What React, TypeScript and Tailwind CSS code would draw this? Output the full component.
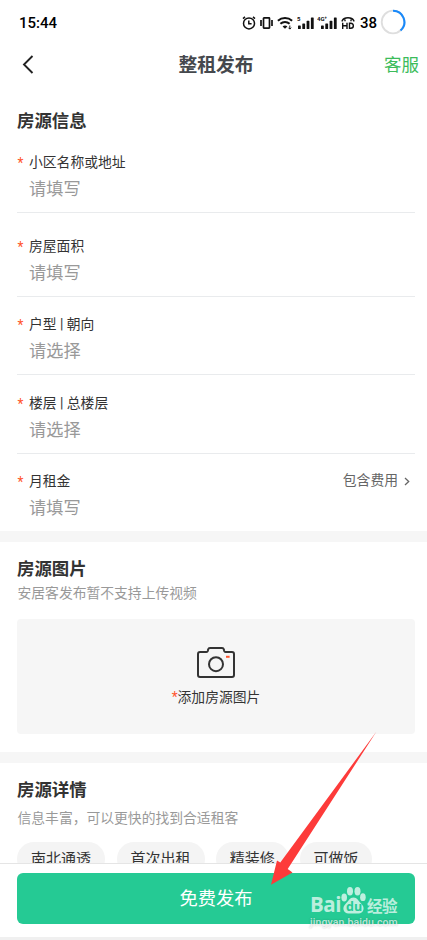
import type { ReactNode } from 'react';
import clsx from 'clsx';

interface Field {
  label: string;
  placeholder: string;
  height: string;
  extra?: string;
}

const fields: Field[] = [
  { label: '小区名称或地址', placeholder: '请填写', height: 'h-[76px]' },
  { label: '房屋面积', placeholder: '请填写', height: 'h-[84px]' },
  { label: '户型 | 朝向', placeholder: '请选择', height: 'h-[78px]' },
  { label: '楼层 | 总楼层', placeholder: '请选择', height: 'h-[79px]' },
  { label: '月租金', placeholder: '请填写', height: 'h-[77px]', extra: '包含费用' },
];

const tags = [
  { name: '南北通透', width: 'w-[88px]' },
  { name: '首次出租', width: 'w-[88px]' },
  { name: '精装修', width: 'w-[72.5px]' },
  { name: '可做饭', width: 'w-[72px]' },
];

function SignalBars({ label, width }: { label: string; width: number }) {
  return (
    <svg width={width} height="14" viewBox={`0 0 ${width} 14`} fill="#111">
      <text x="0" y="5" fontSize="6" fontWeight="700" fontFamily="Roboto, sans-serif">
        {label}
      </text>
      <g transform={`translate(${width - 16} 0)`}>
        <rect x="0" y="9.5" width="2.8" height="3.5" rx="0.6" />
        <rect x="4.3" y="7.5" width="2.8" height="5.5" rx="0.6" />
        <rect x="8.6" y="4.8" width="2.8" height="8.2" rx="0.6" />
        <rect x="12.9" y="1.5" width="2.8" height="11.5" rx="0.6" />
      </g>
    </svg>
  );
}

function StatusBar() {
  return (
    <div className="flex h-[45px] items-center justify-between pr-[21px] pl-[19px] font-[Roboto,sans-serif] text-[15px] font-medium text-black">
      <span className="mt-px">15:44</span>
      <div className="flex items-center">
        {/* Alarma */}
        <svg width="14" height="14" viewBox="0 0 14 14" fill="none" stroke="#111" strokeWidth="1.5">
          <circle cx="7" cy="7.4" r="5.5" />
          <path d="M6.8 4.5v3.2h2.8M1 2.6 3 .9M13 2.6 11 .9" />
        </svg>
        {/* Vibración */}
        <svg className="ml-[4px]" width="13" height="14" viewBox="0 0 13 14" fill="none" stroke="#111" strokeWidth="1.7">
          <rect x="3.5" y="1.9" width="6" height="10.2" rx="0.5" />
          <path d="M1 4v6M12 4v6" />
        </svg>
        {/* Wifi */}
        <svg className="ml-[4px]" width="16" height="14" viewBox="0 0 16 14" fill="none" stroke="#111" strokeWidth="2">
          <path d="M.9 4.7c4-3.6 10.2-3.6 14.2 0M3.4 7.8c2.6-2.4 6.6-2.4 9.2 0" />
          <path d="M8 12.8 5.6 10.4c1.3-1.2 3.5-1.2 4.8 0z" fill="#111" stroke="none" />
          <path d="M12.8 9.5v3.6M11.4 11.7l1.4 1.4 1.4-1.4" strokeWidth="1" />
        </svg>
        <div className="ml-[4px] flex gap-[3px]">
          <SignalBars label="5" width={17} />
          <SignalBars label="4G⁺" width={20} />
        </div>
        {/* Llamada HD */}
        <svg className="ml-[4px]" width="14" height="14" viewBox="0 0 14 14" fill="none" stroke="#111" strokeWidth="1.4">
          <path d="M1.2 5.5V4.6C3.2.7 10.8.7 12.8 4.6v.9M4 5.2V3.6M10 5.2V3.6" />
          <path d="M1.7 6.7V13M6 6.7V13M1.7 9.8H6M8.5 7.3v5h1.3c3.4 0 3.4-5 0-5z" />
        </svg>
        <span className="mt-px ml-[5px]">38</span>
        <svg className="mt-[-2px] ml-[3px]" width="26" height="26" viewBox="0 0 26 26" fill="none">
          <circle cx="13" cy="13" r="11.3" stroke="#dedede" strokeWidth="1.8" />
          <path d="M13 1.7A11.3 11.3 0 0 1 20.5 21.5" stroke="#1989fa" strokeWidth="2.1" />
        </svg>
      </div>
    </div>
  );
}

function NavBar() {
  return (
    <header className="grid h-[38px] grid-cols-3 items-center pr-2 pl-[21px]">
      <svg width="13" height="20" viewBox="0 0 13 20" fill="none" stroke="#222" strokeWidth="1.9">
        <path d="M11.5 2 3 10.5l8.5 8.5" />
      </svg>
      <h1 className="-ml-2 text-center text-[18.8px] leading-6 font-bold whitespace-nowrap text-[#45484d]">整租发布</h1>
      <span className="text-right text-[17.5px] leading-6 text-[#3cbc5b]">客服</span>
    </header>
  );
}

function SectionTitle({ children }: { children: ReactNode }) {
  return <h2 className="text-[17.4px] leading-6 font-bold text-[#333]">{children}</h2>;
}

function FormRow({ field, last }: { field: Field; last: boolean }) {
  return (
    <div
      className={clsx(
        'flex flex-col justify-end gap-1 pb-3',
        field.height,
        !last && 'border-b border-[#e9ebed]',
      )}
    >
      <div className="flex h-5 items-center font-[Roboto,'Noto_Sans_CJK_SC',sans-serif] text-[13.8px] leading-5 text-[#333]">
        <span className="mt-px w-3 pl-[0.5px] text-[#ff552e]">*</span>
        <span>{field.label}</span>
        {field.extra && (
          <span className="mt-[-2px] ml-auto flex items-center text-[#666]">
            {field.extra}
            <svg className="mt-[2px] mr-[5px] ml-[6px]" width="6" height="9" viewBox="0 0 6 9" fill="none" stroke="#666" strokeWidth="1.3">
              <path d="M1 1l3.7 3.5L1 8" />
            </svg>
          </span>
        )}
      </div>
      <div className="pl-3 text-[17.2px] leading-6 text-[#999]">{field.placeholder}</div>
    </div>
  );
}

function CameraIcon() {
  return (
    <svg width="38" height="31" viewBox="0 0 38 31" fill="none" stroke="#333" strokeWidth="2">
      <path d="M3 5h6.5q1 0 1.3-1l.3-1.4Q11.5 1 13 1h12q1.5 0 1.9 1.6l.3 1.4q.3 1 1.3 1H35q2 0 2 2v21q0 2-2 2H3q-2 0-2-2V7q0-2 2-2z" />
      <circle cx="19" cy="17.2" r="7" />
      <path d="M29 9.8h3.6" stroke="#ff552e" />
    </svg>
  );
}

function Watermark() {
  return (
    <div className="absolute top-[22px] left-[310px] w-[90px] text-white/70">
      <div className="flex h-[29px] items-end">
        <span className="w-[31px] font-['Open_Sans',sans-serif] text-[20.5px] leading-[21px] font-bold tracking-[-0.4px]">Bai</span>
        <svg className="shrink-0" width="25" height="29" viewBox="0 0 25 29" fill="currentColor">
          <ellipse cx="9" cy="5.2" rx="3" ry="4.2" />
          <ellipse cx="16.5" cy="5.2" rx="3" ry="4.2" />
          <ellipse cx="3.2" cy="11.5" rx="2.8" ry="3.9" />
          <ellipse cx="21.9" cy="11.2" rx="2.8" ry="3.9" />
          <path d="M12.5 11.5c3.8 0 4.8 3.5 7.6 6 4.7 4.2 2.2 10-2.6 10h-10c-4.8 0-7.3-5.8-2.6-10 2.800-2.500 3.800-6 7.600-6z" />
          <text x="5" y="25.3" fontSize="12.5" fontWeight="700" fontFamily="Open Sans, sans-serif" fill="#25ca94">
            du
          </text>
        </svg>
        <span className="ml-[1px] text-[15.5px] leading-[20px] font-bold tracking-[-0.4px] whitespace-nowrap">经验</span>
      </div>
      <div className="mt-[2px] font-[Roboto,sans-serif] text-[10.5px] leading-3 font-medium tracking-[0.1px] [text-shadow:0_0_2px_rgba(0,0,0,0.25)]">
        jingyan.baidu.com
      </div>
    </div>
  );
}

export default function App() {
  return (
    <div className="relative flex h-[940px] w-[427px] flex-col overflow-hidden bg-white font-['Noto_Sans_CJK_SC',sans-serif]">
      <StatusBar />
      <NavBar />

      <main className="min-h-0 flex-1 overflow-hidden">
        <section className="pt-[25px] pr-3 pl-[17px]">
          <SectionTitle>房源信息</SectionTitle>
          <div className="mt-[5px]">
            {fields.map((field, i) => (
              <FormRow key={field.label} field={field} last={i === fields.length - 1} />
            ))}
          </div>
        </section>

        <section className="h-[221px] border-t-[11px] border-[#f6f6f6] pt-[14px] pr-3 pl-[17px]">
          <SectionTitle>房源图片</SectionTitle>
          <p className="mt-[2px] pl-[0.5px] text-[13.8px] leading-5 text-[#999]">安居客发布暂不支持上传视频</p>
          <div className="mt-[17px] flex h-[115px] flex-col items-center rounded bg-[#f6f6f6] pt-[28px]">
            <CameraIcon />
            <p className="mt-[9px] font-[Roboto,'Noto_Sans_CJK_SC',sans-serif] text-[13.8px] leading-5 text-[#333]">
              <span className="text-[#ff552e]">*</span>添加房源图片
            </p>
          </div>
        </section>

        <section className="border-t-[11px] border-[#f6f6f6] pt-[14px] pl-[17px]">
          <SectionTitle>房源详情</SectionTitle>
          <p className="mt-[6px] pl-[0.5px] text-[13.8px] leading-5 text-[#999]">信息丰富，可以更快的找到合适租客</p>
          <div className="mt-[15px] flex gap-[11.5px]">
            {tags.map((tag) => (
              <span
                key={tag.name}
                className={clsx('h-[34px] rounded-full bg-[#f4f4f4] text-center text-[15px] leading-[31px] text-[#333]', tag.width)}
              >
                {tag.name}
              </span>
            ))}
          </div>
        </section>
      </main>

      <footer className="relative h-[77px] shrink-0 border-t border-b-[3px] border-t-[#e5e5e5] border-b-[#f0f0f0] bg-white pt-[9px] pr-3 pl-[17px]">
        <button className="h-[51px] w-full rounded-md bg-[#25ca94] pb-[2px] text-[18.3px] text-white">免费发布</button>
        <Watermark />
      </footer>

      {/* Flecha hacia el botón de publicar */}
      <svg className="absolute top-[730px] left-[268px]" width="112" height="158" viewBox="0 0 112 158" fill="#fd3b3a">
        <path d="M108.5 1.5 19.7 139l4.8 3.4L3 154.7 9 130.5l3.3 2z" />
      </svg>
    </div>
  );
}
